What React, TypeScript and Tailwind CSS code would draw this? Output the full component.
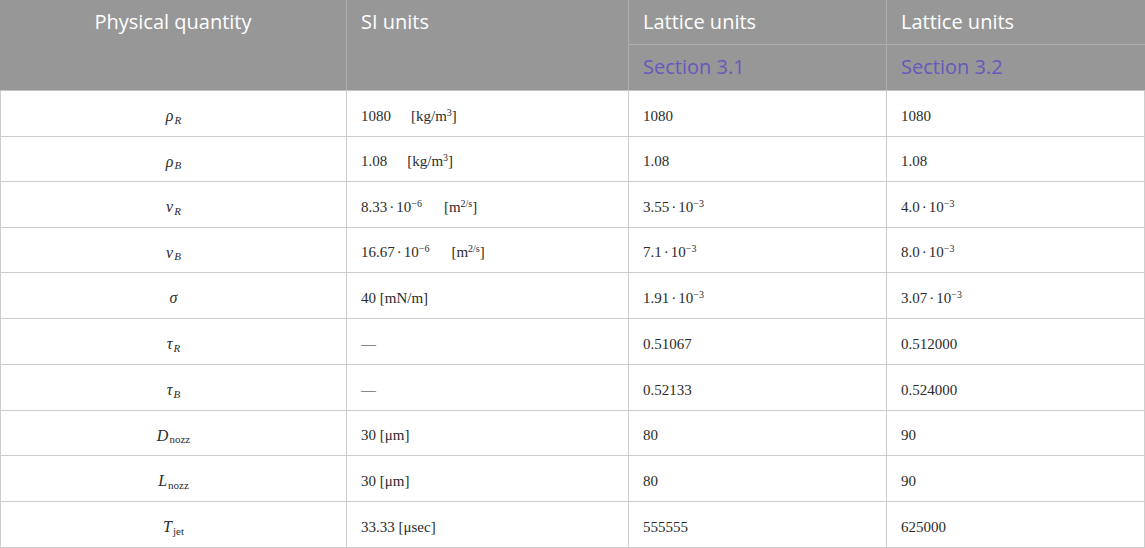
import type { ReactNode } from "react";

interface Row {
  symbol: ReactNode;
  si: ReactNode;
  s31: ReactNode;
  s32: ReactNode;
  h: string;
}

function Sym({ base, sub, subItalic = true }: { base: string; sub: string; subItalic?: boolean }) {
  return (
    <span className="italic text-[16px]">
      {base}
      <sub className={`${subItalic ? "italic" : "not-italic"} text-[11px] ml-[1px]`}>{sub}</sub>
    </span>
  );
}

function Pow({ m, e }: { m: string; e: string }) {
  return (
    <span>
      {m}
      <span className="mx-[2px]">·</span>10<sup className="text-[10px]">{e}</sup>
    </span>
  );
}

const rows: Row[] = [
  {
    symbol: <Sym base="ρ" sub="R" />,
    si: (
      <span>
        1080<span className="ml-[20px]">[kg/m<sup className="text-[10px]">3</sup>]</span>
      </span>
    ),
    s31: "1080",
    s32: "1080",
    h: "h-[46px]",
  },
  {
    symbol: <Sym base="ρ" sub="B" />,
    si: (
      <span>
        1.08<span className="ml-[20px]">[kg/m<sup className="text-[10px]">3</sup>]</span>
      </span>
    ),
    s31: "1.08",
    s32: "1.08",
    h: "h-[45px]",
  },
  {
    symbol: <Sym base="ν" sub="R" />,
    si: (
      <span>
        <Pow m="8.33" e="−6" />
        <span className="ml-[22px]">[m<sup className="text-[10px]">2/s</sup>]</span>
      </span>
    ),
    s31: <Pow m="3.55" e="−3" />,
    s32: <Pow m="4.0" e="−3" />,
    h: "h-[46px]",
  },
  {
    symbol: <Sym base="ν" sub="B" />,
    si: (
      <span>
        <Pow m="16.67" e="−6" />
        <span className="ml-[22px]">[m<sup className="text-[10px]">2/s</sup>]</span>
      </span>
    ),
    s31: <Pow m="7.1" e="−3" />,
    s32: <Pow m="8.0" e="−3" />,
    h: "h-[45px]",
  },
  {
    symbol: <span className="italic text-[16px]">σ</span>,
    si: "40 [mN/m]",
    s31: <Pow m="1.91" e="−3" />,
    s32: <Pow m="3.07" e="−3" />,
    h: "h-[46px]",
  },
  { symbol: <Sym base="τ" sub="R" />, si: "—", s31: "0.51067", s32: "0.512000", h: "h-[46px]" },
  { symbol: <Sym base="τ" sub="B" />, si: "—", s31: "0.52133", s32: "0.524000", h: "h-[46px]" },
  { symbol: <Sym base="D" sub="nozz" subItalic={false} />, si: "30 [μm]", s31: "80", s32: "90", h: "h-[45px]" },
  { symbol: <Sym base="L" sub="nozz" subItalic={false} />, si: "30 [μm]", s31: "80", s32: "90", h: "h-[46px]" },
  { symbol: <Sym base="T" sub="jet" subItalic={false} />, si: "33.33 [μsec]", s31: "555555", s32: "625000", h: "h-[46px]" },
];

export default function App() {
  const head = "text-[20px] font-['Open_Sans',sans-serif] leading-none pt-[12px]";
  const cell = "flex items-center border-b border-r border-[#cdcdcd] pt-[5px]";
  return (
    <div className="w-[1145px] h-[548px] overflow-hidden bg-white font-['Liberation_Serif',serif] text-[15px] text-[#2b2b2b]">
      <div className="grid grid-cols-[347px_282px_258px_258px] bg-[#979797] border-b border-[#c4c4c4]">
        <div className={`${head} text-white row-span-2 h-[90px] border-r border-[#adadad] flex justify-center`}>
          Physical quantity
        </div>
        <div className={`${head} text-white row-span-2 border-r border-[#adadad] pl-[14px]`}>SI units</div>
        <div className={`${head} text-white h-[45px] border-r border-b border-[#adadad] pl-[14px]`}>Lattice units</div>
        <div className={`${head} text-white h-[45px] border-b border-[#adadad] pl-[14px]`}>Lattice units</div>
        <div className={`${head} text-[#6559bd] h-[45px] border-r border-[#adadad] pl-[14px]`}>Section 3.1</div>
        <div className={`${head} text-[#6559bd] h-[45px] pl-[14px]`}>Section 3.2</div>
      </div>
      {rows.map((r, i) => (
        <div key={i} className={`grid grid-cols-[347px_282px_258px_258px] ${r.h}`}>
          <div className={`${cell} border-l justify-center`}>{r.symbol}</div>
          <div className={`${cell} pl-[14px]`}>{r.si}</div>
          <div className={`${cell} pl-[14px]`}>{r.s31}</div>
          <div className={`${cell} pl-[14px]`}>{r.s32}</div>
        </div>
      ))}
    </div>
  );
}
